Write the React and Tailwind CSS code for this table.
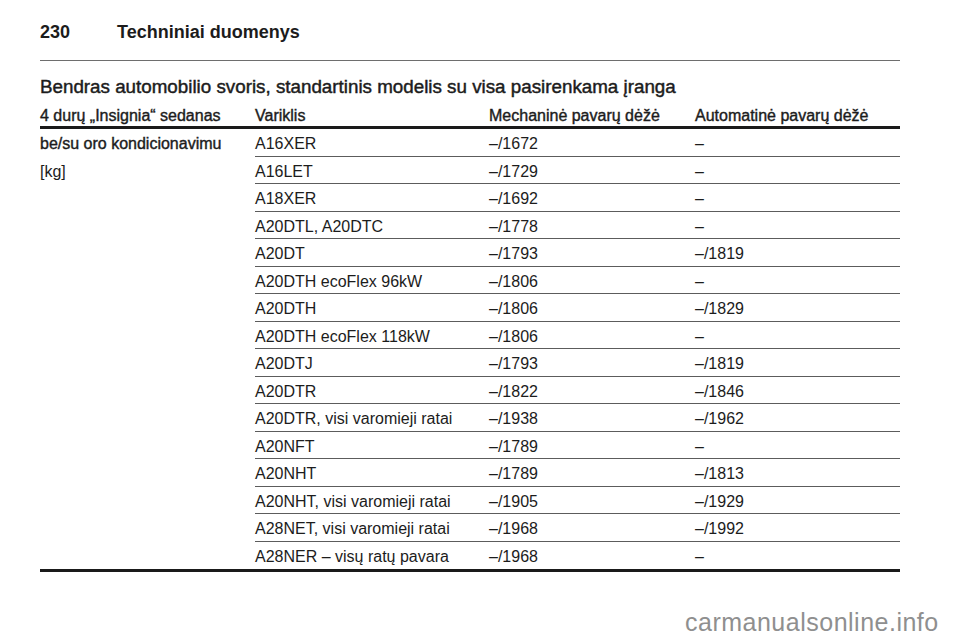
import React from 'react';

const rows = [
    ['A16XER', '–/1672', '–'],
    ['A16LET', '–/1729', '–'],
    ['A18XER', '–/1692', '–'],
    ['A20DTL, A20DTC', '–/1778', '–'],
    ['A20DT', '–/1793', '–/1819'],
    ['A20DTH ecoFlex 96kW', '–/1806', '–'],
    ['A20DTH', '–/1806', '–/1829'],
    ['A20DTH ecoFlex 118kW', '–/1806', '–'],
    ['A20DTJ', '–/1793', '–/1819'],
    ['A20DTR', '–/1822', '–/1846'],
    ['A20DTR, visi varomieji ratai', '–/1938', '–/1962'],
    ['A20NFT', '–/1789', '–'],
    ['A20NHT', '–/1789', '–/1813'],
    ['A20NHT, visi varomieji ratai', '–/1905', '–/1929'],
    ['A28NET, visi varomieji ratai', '–/1968', '–/1992'],
    ['A28NER – visų ratų pavara', '–/1968', '–'],
];

export default function App() {
    return (
        <div className="relative w-[960px] h-[642px] overflow-hidden bg-white text-[#1c1c1c] font-['Liberation_Sans',Arial,sans-serif]">
            <div className="w-[940px] pl-[40px] pt-[21px]">
                {/* Page header */}
                <div className="flex items-baseline text-[18px] leading-[22px] font-bold">
                    <span className="w-[77px]">230</span>
                    <span>Techniniai duomenys</span>
                </div>
                <div className="mt-[17px] h-px w-[860px] bg-[#6e6e6e]"></div>

                {/* Section title */}
                <h2 className="mt-[14px] text-[18.8px] leading-[24px] font-normal [-webkit-text-stroke:0.45px_#1c1c1c]">
                    Bendras automobilio svoris, standartinis modelis su visa pasirenkama įranga
                </h2>

                {/* Table header */}
                <div className="mt-[7px] w-[860px] grid grid-cols-[215px_234px_206px_1fr] border-b-[3px] border-[#1a1a1a] text-[16px] leading-[20px] [-webkit-text-stroke:0.4px_#1c1c1c]">
                    <div>4 durų „Insignia“ sedanas</div>
                    <div>Variklis</div>
                    <div>Mechaninė pavarų dėžė</div>
                    <div>Automatinė pavarų dėžė</div>
                </div>

                {/* Table body */}
                <div className="w-[860px] grid grid-cols-[215px_1fr] text-[16px]">
                    <div className="pt-[1px] leading-[27.5px]">
                        <div className="[-webkit-text-stroke:0.4px_#1c1c1c]">be/su oro kondicionavimu</div>
                        <div>[kg]</div>
                    </div>
                    <div>
                        {rows.map((r, i) => (
                            <div
                                key={i}
                                className={`grid grid-cols-[234px_206px_1fr] h-[27.5px] leading-[29px] ${i < rows.length - 1 ? 'border-b border-[#5c5c5c]' : ''}`}
                            >
                                <div className="whitespace-nowrap">{r[0]}</div>
                                <div>{r[1]}</div>
                                <div>{r[2]}</div>
                            </div>
                        ))}
                    </div>
                </div>
                <div className="h-[3px] w-[860px] bg-[#1a1a1a]"></div>
            </div>

            {/* Watermark */}
            <div className="absolute left-[685px] top-[610px] text-[25px] leading-[25px] tracking-[0.5px] text-[#8f8f8f]">
                carmanualsonline.info
            </div>
        </div>
    );
}
